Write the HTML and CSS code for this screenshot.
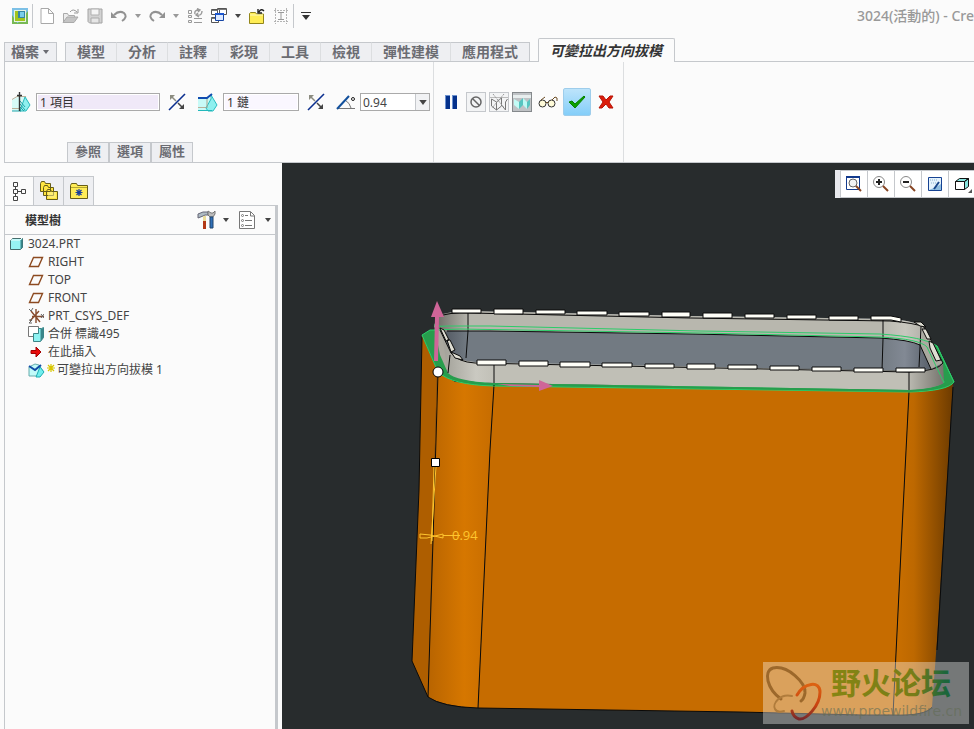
FILE: index.html
```html
<!DOCTYPE html>
<html lang="zh-Hant">
<head>
    <meta charset="UTF-8">
    <meta name="viewport" content="width=device-width, initial-scale=1.0">
    <title>3024(活動的)</title>
    <link rel="stylesheet" href="styles.css">
</head>
<body>
    <!-- shared icons -->
    <svg class="defs" aria-hidden="true">
        <symbol id="caret" viewBox="0 0 6 4"><path d="M0 0h6L3 4z" fill="currentColor"/></symbol>
        <symbol id="flip" viewBox="0 0 18 18">
            <path d="M1 17 17 1" stroke="#0b2f8f" stroke-width="1.6"/>
            <path d="M2 2h5L2 7z" fill="#8c8c80"/><path d="M3 3l5 5" stroke="#8c8c80" stroke-width="1.5"/>
            <path d="M16 16h-5l5-5z" fill="#444"/><path d="M10 10l5 5" stroke="#444" stroke-width="1.5"/>
        </symbol>
        <symbol id="plane" viewBox="0 0 16 12">
            <path d="M1.500 10.500h9l4-9h-9z" fill="none" stroke="#8c4a20" stroke-width="1.400"/>
        </symbol>
    </svg>

    <div class="quickbar">
        <button class="tool" aria-label="視窗">
            <svg width="16" height="16"><path d="M0 0h16v16H0z" fill="#7cc0e6"/><path d="M0 7l6 9H0zM16 3v13H5z" fill="#78b955"/><path d="M2 2h12v12H2z" fill="#e4f3e4"/><path d="M3 3h10v10H3z" fill="#a2c51c"/><path d="M6 3h7v7H6z" fill="#3586a5"/><path d="M8 4h4v5H8z" fill="#78cdea"/></svg>
        </button>
        <span class="divider"></span>
        <button class="tool first" aria-label="新建">
            <svg width="14" height="16"><path d="M1 .5h7.500l5 5v10H1z M8.500.500v5h5" fill="#fff" stroke="#a8a8a8"/></svg>
        </button>
        <button class="tool" aria-label="開啟">
            <svg width="18" height="16"><path d="M1.500 14V5.500h4l1 2h6V9" fill="#ececec" stroke="#aaa"/><path d="M1 14.500 5 9h11l-4 5.500z" fill="#c4c4c4" stroke="#aaa"/><path d="M8 4q3-4 7 0M16 1v4h-4" fill="none" stroke="#999"/></svg>
        </button>
        <button class="tool" aria-label="儲存">
            <svg width="16" height="16"><path d="M1 1h14v14H2.500L1 13.500z" fill="#d2d2d2" stroke="#a4a4a4"/><path d="M4 1h8v6H4z" fill="#f4f4f4" stroke="#b0b0b0"/><path d="M4 10h8v5H4z" fill="#e6e6e6" stroke="#aaa"/></svg>
        </button>
        <button class="tool" aria-label="復原">
            <svg width="16" height="14"><path d="M3 6q5-5 10-2 4 4-2 8" fill="none" stroke="#929292" stroke-width="2"/><path d="M0 3v6h6z" fill="#929292"/></svg>
        </button>
        <button class="drop pale" aria-label="復原清單"><svg width="6" height="4"><use href="#caret"/></svg></button>
        <button class="tool" aria-label="重做">
            <svg width="16" height="14"><path d="M13 6Q8 1 3 4q-4 4 2 8" fill="none" stroke="#929292" stroke-width="2"/><path d="M16 3v6h-6z" fill="#929292"/></svg>
        </button>
        <button class="drop pale" aria-label="重做清單"><svg width="6" height="4"><use href="#caret"/></svg></button>
        <button class="tool" aria-label="重新產生">
            <svg width="16" height="16" fill="none" stroke="#999"><path d="M1.500 2.500h3v3h-3zM1.500 7.500h3v2h-3zM1.500 12.500h3v2h-3zM7 10.500h8M7 14.500h8"/><path d="M8 6q-1-4 4-4M10 .5l3 1.500-2 2M15 3q0 5-5 4M12 9l-3-2 2-2" stroke-width="1.400"/></svg>
        </button>
        <button class="tool" aria-label="視窗切換">
            <svg width="16" height="16"><path d="M.5 1.500h8v5h-8zM6.500.500h9v6h-9zM.5 9.500h7v5h-7z" fill="#fff" stroke="#555"/><path d="M.5 2.500h6M7 1.500h8M.5 10.500h6" stroke="#777"/><path d="M4.500 5.500h8v7h-8z" fill="#dce9ff" stroke="#1545a5"/><path d="M4 6h9" stroke="#1b56d0" stroke-width="2"/></svg>
        </button>
        <button class="drop" aria-label="視窗清單"><svg width="6" height="4"><use href="#caret"/></svg></button>
        <button class="tool" aria-label="關閉">
            <svg width="16" height="16"><path d="M.5 15.500V5.500l1-1h5l1 1.500h7v9.500z" fill="#ffed55" stroke="#93861b"/><path d="M1 7h13" stroke="#fffbc0"/><path d="M15 3q-3-3-5 1M9 1v4h4" fill="none" stroke="#222" stroke-width="1.400"/></svg>
        </button>
        <button class="tool" aria-label="選取">
            <svg width="16" height="16" fill="none" stroke="#b4b4b4"><path d="M1 2.500h14M1 13.500h14M2.500 0v16M13.500 0v16" stroke-dasharray="2 1"/><path d="M5 4.500h6M5 11.500h6M8 5v6" stroke="#999"/></svg>
        </button>
        <span class="divider"></span>
        <button class="tool" aria-label="自訂">
            <svg width="10" height="8"><path d="M0 0h10v1H0zM1 3h8L5 8z" fill="#333"/></svg>
        </button>
        <div class="title">3024(活動的) - Cre</div>
    </div>

    <div class="tabs">
        <button class="tab file">檔案<svg width="6" height="4"><use href="#caret"/></svg></button>
        <div class="tab-group">
            <button class="tab">模型</button>
            <button class="tab">分析</button>
            <button class="tab">註釋</button>
            <button class="tab">彩現</button>
            <button class="tab">工具</button>
            <button class="tab">檢視</button>
            <button class="tab">彈性建模</button>
            <button class="tab">應用程式</button>
        </div>
        <button class="tab active">可變拉出方向拔模</button>
    </div>

    <div class="dashboard">
        <div class="group settings">
            <div class="row">
                <svg class="lead" width="20" height="20"><path d="M1 8l8-4h6l4 9-4 6H1z" fill="#d6faf7"/><path d="M1 7.500l5-3h9M1 16.500h7" fill="none" stroke="#b9b09a"/><path d="M14 5l5 8-4 6H9l2-6z" fill="#8ff0ef" stroke="#2bb8bb"/><path d="M1 19h9M9 12l5 6M9 9l5 6M9 15l4 4" stroke="#1fa5aa"/><path d="M8.500 2v17M6 3.500h5M8.500 0v4" stroke="#333" stroke-width="1.400"/></svg>
                <input class="field hinge" type="text" value="1 項目" aria-label="拔模曲面">
                <button class="flip" aria-label="反轉方向"><svg width="18" height="18"><use href="#flip"/></svg></button>
                <svg class="chain" width="24" height="20"><path d="M4 6h12l6 8-4 5H4z" fill="#c8faf7"/><path d="M4 6.500h9l4-4M4 15.500h8" fill="none" stroke="#b9b09a"/><path d="M17 3l6 10-4 6h-5l-2-3 5-9z" fill="#8ff0ef" stroke="#29bdc0"/><path d="M4 18.500h14" stroke="#22b8bb"/><path d="M4 6h9l5-4" fill="none" stroke="#104cb0" stroke-width="2"/><path d="M13 7v9" stroke="#aaa38c"/></svg>
                <input class="field link" type="text" value="1 鏈" aria-label="拔模樞軸">
                <button class="flip" aria-label="反轉角度"><svg width="18" height="18"><use href="#flip"/></svg></button>
                <svg class="angle" width="22" height="16"><path d="M5 14.500h17M12 6q5 3 6 8" fill="none" stroke="#777"/><path d="M4 15 16 2" stroke="#12509c" stroke-width="2"/><circle cx="20" cy="5" r="1.500" fill="none" stroke="#222"/></svg>
                <div class="combo">
                    <select aria-label="角度"><option>0.94</option></select>
                    <span class="combo-arrow"><svg width="8" height="5"><use href="#caret"/></svg></span>
                </div>
            </div>
            <div class="subtabs">
                <button class="subtab">參照</button>
                <button class="subtab">選項</button>
                <button class="subtab">屬性</button>
            </div>
        </div>
        <div class="group actions">
            <div class="row">
                <button class="pause" aria-label="暫停"><svg width="12" height="14"><path d="M0 0h5v14H0zM7 0h5v14H7z" fill="#6d92cf"/><path d="M1 1h4v13H1zM8 1h4v13H8z" fill="#05318b"/></svg></button>
                <button class="mode" aria-label="無預覽"><svg width="14" height="14" fill="none" stroke="#666" stroke-width="1.500"><circle cx="7" cy="7" r="5"/><path d="M3.500 3.500l7 7"/></svg></button>
                <button class="mode" aria-label="未附加"><svg width="18" height="18" fill="none" stroke="#777"><path d="M0 4.500h18" stroke="#bbb"/><path d="M1.500 6v7l5 4V9zM6.500 17l5-4V5l-5 4M11.500 5v7l4 5V9l2-3"/><path d="M3 1l12 15M14 1 2 15" stroke="#999" stroke-dasharray="2 1"/></svg></button>
                <button class="mode pressed" aria-label="已附加"><svg width="18" height="16"><path d="M0 1h18v3H0z" fill="#e8eeee"/><path d="M1 5l5 3v7l-5-4z" fill="#c3fbf5"/><path d="M6 8l4-4v7l-4 4z" fill="#56c4bf"/><path d="M10 4l4 4v7l-4-4z" fill="#bdf9f4"/><path d="M14 8l3-3v6l-3 4z" fill="#56c4bf"/></svg></button>
                <button class="glasses" aria-label="預覽"><svg width="20" height="14" fill="#fffbd9" stroke="#333"><circle cx="4.500" cy="8.500" r="3.500"/><circle cx="13.500" cy="8.500" r="3.500"/><path d="M8 8q1-2 2 0M3 5l4-3M14 5l3-3q3 0 2 4" fill="none" stroke="#6b4b22"/></svg></button>
                <button class="ok" aria-label="確定"><svg width="18" height="14"><path d="M1 7l3-1 3 3 9-8 1 1L7 13z" fill="#0ba100" stroke="#078000"/></svg></button>
                <button class="cancel" aria-label="取消"><svg width="16" height="14"><path d="M1 1h4l3 4 4-4h3l-4 6 4 6h-4l-3-4-4 4H1l4-6z" fill="#dc1c0a" stroke="#b51407"/></svg></button>
            </div>
        </div>
    </div>

    <div class="workspace">
        <div class="navigator">
            <div class="nav-tabs">
                <button class="nav-tab active" aria-label="模型樹"><svg width="14" height="20" fill="none" stroke="#444"><path d="M1.500.500h4v4h-4zM1.500 7.500h4v4h-4zM1.500 14.500h4v4h-4zM9.500 7.500h4v4h-4zM3.500 5v2M3.500 12v2M6 9.500h3"/></svg></button>
                <button class="nav-tab" aria-label="資料夾瀏覽器"><svg width="20" height="20" fill="#ffe640" stroke="#665d18"><path d="M1.500 10.500v-8l1-2h3l1 2h5v8zM4.500 14.500v-8l1-2h3l1 2h5v8zM7.500 18.500v-8l1-2h3l1 2h6v8z"/><path d="M9 12h8M9 14h8M9 16h8" stroke="#fff7a3"/></svg></button>
                <button class="nav-tab" aria-label="我的最愛"><svg width="18" height="16"><path d="M.500 15.500v-13l1-2h5l1 2h10v13z" fill="#ffec56" stroke="#665d18"/><path d="M1 4.500h16" stroke="#b5a631"/><path d="M9 6v7M5.500 9.500h7M6.500 7l5 5M11.500 7l-5 5" stroke="#193e9d" stroke-width="1.200"/></svg></button>
            </div>
            <div class="panel">
                <div class="panel-head">
                    <h2>模型樹</h2>
                    <button class="tool" aria-label="設定"><svg width="20" height="20"><path d="M1 4l5-2h5v3H8L6 6 1 8z" fill="#aebbc3" stroke="#667"/><path d="M6 6h3v13H6z" fill="#b33916"/><path d="M6 6h3v5H6z" fill="#eadd9c"/><path d="M11 1v4l2 2h3l2-3V1l-2 2h-2z" fill="#bbb" stroke="#777"/><path d="M13 7h3v11h-3z" fill="#3170b8" stroke="#20446c"/></svg></button>
                    <button class="drop" aria-label="設定清單"><svg width="6" height="4"><use href="#caret"/></svg></button>
                    <button class="tool" aria-label="顯示"><svg width="16" height="18" fill="none" stroke="#777"><path d="M.5.500h11l4 4v13H.500z" fill="#fff"/><path d="M11.500 1v4h4M6 4.500h3M6 9.500h7M6 14.500h7"/><circle cx="3.500" cy="4.500" r="1"/><circle cx="3.500" cy="9.500" r="1"/><circle cx="3.500" cy="14.500" r="1"/></svg></button>
                    <button class="drop last" aria-label="顯示清單"><svg width="6" height="4"><use href="#caret"/></svg></button>
                </div>
                <ul class="tree">
                    <li class="root"><svg width="14" height="14"><path d="M.5 3.500l2-2h10v9l-2 2H.5z" fill="#97f3f3" stroke="#446b6b"/><path d="M10.500 3.500l2-2v9l-2 2z" fill="#39868b"/><path d="M1 3h9l2-2" fill="none" stroke="#effffe"/></svg>3024.PRT</li>
                    <li><svg width="16" height="12"><use href="#plane"/></svg>RIGHT</li>
                    <li><svg width="16" height="12"><use href="#plane"/></svg>TOP</li>
                    <li><svg width="16" height="12"><use href="#plane"/></svg>FRONT</li>
                    <li><svg width="16" height="16" fill="none" stroke="#884b2d" stroke-width="1.400"><path d="M8 1v14M3 3l9 11M2 13l9-10M4 8.500h12"/><path d="M1 1l2 2 2-3M1 12h3l-3 3h3M13 6l3 4M16 6l-3 4" stroke="#666" stroke-width="1"/></svg>PRT_CSYS_DEF</li>
                    <li><svg width="16" height="16"><path d="M.5.500h10v10H.5z" fill="#fff" stroke="#777"/><path d="M5.500 7.500h5v-5h3l2-1v10l-3 4h-7z" fill="#8ff2f2" stroke="#3c8587"/><path d="M12.500 3v12.500l3-4V2z" fill="#39868b"/></svg>合併 標識495</li>
                    <li><svg width="16" height="12"><path d="M3 4.500h5V1l5 5-5 5V7.500H3z" fill="#e80c0c" stroke="#a30000"/></svg>在此插入</li>
                    <li class="new-feature"><svg width="29" height="16"><path d="M1 5l6-3 4 1 4 6-4 5H1z" fill="#c1fbf9" stroke="#68abac"/><path d="M12 5l4 5-4 5H8z" fill="#71eeee" stroke="#1daeb2"/><path d="M1 4l6 4 6-5" fill="none" stroke="#104ca5" stroke-width="2"/><path d="M23 2v8M19 6h8M20 3l6 6M26 3l-6 6" stroke="#d8c600" stroke-width="1.200"/></svg>可變拉出方向拔模 1</li>
                </ul>
            </div>
        </div>

        <div class="canvas">
            <svg class="model" viewBox="282 163 692 566" preserveAspectRatio="xMinYMin slice">
                <defs>
                    <linearGradient id="leftFillet"><stop offset="0" stop-color="#b86400"/><stop offset=".55" stop-color="#d67700"/><stop offset="1" stop-color="#c66c00"/></linearGradient>
                    <linearGradient id="rightFillet"><stop offset="0" stop-color="#cb7000"/><stop offset=".35" stop-color="#bd6800"/><stop offset="1" stop-color="#6d3b00"/></linearGradient>
                    <linearGradient id="inside" gradientUnits="userSpaceOnUse" x1="442" y1="0" x2="945" y2="0"><stop offset="0" stop-color="#505760"/><stop offset=".05" stop-color="#727a82"/><stop offset=".87" stop-color="#727a82"/><stop offset=".92" stop-color="#828994"/><stop offset=".97" stop-color="#59616b"/></linearGradient>
                    <linearGradient id="backWall" gradientUnits="userSpaceOnUse" x1="440" y1="0" x2="930" y2="0"><stop offset="0" stop-color="#777670"/><stop offset=".06" stop-color="#b8b7ae"/><stop offset=".9" stop-color="#b8b7ae"/><stop offset=".95" stop-color="#c8c7bf"/><stop offset="1" stop-color="#aaa9a1"/></linearGradient>
                    <linearGradient id="frontWall" gradientUnits="userSpaceOnUse" x1="446" y1="0" x2="946" y2="0"><stop offset="0" stop-color="#a5a49c"/><stop offset=".06" stop-color="#cac9c1"/><stop offset=".1" stop-color="#c0bfb6"/><stop offset=".92" stop-color="#c0bfb6"/><stop offset="1" stop-color="#716f69"/></linearGradient>
                    <linearGradient id="brand"><stop offset="0" stop-color="#868513"/><stop offset=".7" stop-color="#777d18"/><stop offset=".95" stop-color="#1c663b"/></linearGradient>
                    <linearGradient id="ribbon" x2="0" y2="1"><stop offset="0" stop-color="#dc6212"/><stop offset=".6" stop-color="#ca4310"/><stop offset="1" stop-color="#77282b"/></linearGradient>
                </defs>

                <!-- body -->
                <path d="M422 335 437 370 428 697 412 661 419 490z" fill="#ae5e00"/>
                <path d="M437 370 455 382 494 384 490 450 478 708Q442 706 428 697z" fill="url(#leftFillet)"/>
                <path d="M494 384 909 391 902 530 893 715 862 715 740 712 478 708 490 450z" fill="#c66c00"/>
                <path d="M909 391Q940 390 953 382L937 640 932 707Q923 716 893 715L902 530z" fill="url(#rightFillet)"/>
                <path d="M422 337 419 490 412 661 428 697Q442 707 478 708L740 712 862 715 893 715Q926 716 932 707M438 372 433 540 428 697M494 385 490 450 478 708M909 392 902 530 893 715M953 387 937 650" class="edge"/>

                <!-- green draft faces -->
                <path d="M422 335 430 330 440 330 452 374 475 381 494 384 909 389Q938 388 944 382L930 346 937 346 954 382Q948 391 909 392L494 386Q452 385 438 372z" fill="#279d4d" stroke="#2bd06b"/>

                <!-- inner cavity and rim -->
                <path d="M438 316Q448 311 470 311L690 316 890 319Q915 321 924 327L943 363 935 371 475 363 450 357z" fill="url(#inside)"/>
                <path d="M438 316Q448 311 470 311L690 316 890 319Q915 321 924 327L934 346 920 345Q905 339 880 338L690 334 490 331 447 331 440 337 434 325z" fill="url(#backWall)"/>
                <path d="M434 325 440 330 451 355 448 373 440 355z" fill="#aaa89f"/>
                <path d="M441 330 451 353Q458 361 475 362L909 371Q936 370 943 363L944 383Q934 389 909 390L494 383Q456 381 448 373z" fill="url(#frontWall)"/>
                <path d="M920 345 931 369 943 363 924 327z" fill="#aaa99f"/>
                <path d="M438 317Q448 312 470 313L690 318 890 321Q915 323 924 327L943 363Q938 371 909 372L475 363Q458 362 451 353L440 330M447 331 490 331 690 334 880 338Q910 340 920 345L931 369M468 309V331L466 358M883 319V339L882 370M921 327 919 367M450 355 448 373M494 363V386M909 370V392" class="edge"/>
                <path d="M434 325Q440 327 450 326L490 326 700 331 880 334Q925 337 937 346L954 382M434 330 460 329 700 333 880 337Q920 339 927 347L944 383" class="hint"/>
                <path d="M448 376Q458 383 494 384L909 391Q936 390 945 384" fill="none" stroke="#279d4d" stroke-width="2"/>

                <!-- raised teeth along the rim -->
                <path class="tooth" d="M452 309h29v4h-29zM494 309h29v5h-29zM536 310h29v4h-29zM577 311h30v4h-30zM619 312h30v4h-30zM662 312h28v5h-28zM703 313h29v5h-29zM745 314h29v4h-29zM787 315h29v4h-29zM829 316h29v4h-29zM871 316l20 0 10 2v4l-10-2h-20z"/>
                <path class="tooth" d="M477 360h29v5h-29zM519 361h29v5h-29zM560 362h30v5h-30zM602 363h30v4h-30zM645 364h29v4h-29zM687 364h28v5h-28zM728 365h29v4h-29zM770 366h29v4h-29zM812 367h29v4h-29zM854 368h29v4h-29zM896 368h29v4h-29z"/>
                <path class="tooth side" d="M440 328l4 2 5 10-3 1zM447 340l3 0 5 10-4 2zM451 352l9 4 3 4-8-2zM914 322l7 0 5 5-6-1zM922 329l4 0 5 10-4 0zM929 341l4 2 8 17-5 1-6-13z"/>

                <!-- drag handles -->
                <path d="M437 301 444 317H439L438 361H434L435 317H431zM497 384 539 385V380L553 386 539 391V387L510 386z" fill="#cf6598"/>
                <path d="M434 466 432 541M436 466 431 544M420 534l10 1 13 3M420 538h7l16-4M420 534v4M443 534v4M443 535.5h17" fill="none" stroke="#ffc52e"/>
                <circle cx="438" cy="372" r="5" fill="#fff" stroke="#000"/>
                <path d="M431.500 458.500h8v8h-8z" fill="#fff" stroke="#000"/>
                <text class="dimension" x="452" y="540">0.94</text>

                <!-- forum mark -->
                <path d="M763 662h206v62H763z" fill="#fff" fill-opacity=".36"/>
                <g fill="none" stroke-linecap="round">
                    <path d="M781 699C767 689 763 671 773 668 788 665 806 683 805 693Q804 699 801 701" stroke="#9c682b" stroke-width="3"/>
                    <path d="M792 696C780 693 772 704 775 709Q777 713 784 711" stroke="#b07c3c" stroke-width="2"/>
                    <path d="M797 695C804 683 820 680 820 692 820 706 806 720 799 719Q793 717 792 711" stroke="url(#ribbon)" stroke-width="3"/>
                </g>
                <text class="brand" x="831" y="694">野火论坛</text>
                <text class="site" x="821" y="716">www.proewildfire.cn</text>
            </svg>

            <div class="view-tools">
                <button aria-label="重新調整"><svg width="18" height="18"><path d="M1.500 1.500h13v13h-13z" fill="#fff" stroke="#123a8d"/><path d="M1 2h14" stroke="#123a8d" stroke-width="2"/><circle cx="8" cy="8" r="4" fill="#f3f3f3" stroke="#666"/><path d="M11 11l5 5" stroke="#874523" stroke-width="2"/></svg></button>
                <button aria-label="放大"><svg width="18" height="18"><circle cx="7" cy="7" r="5.500" fill="#fff" stroke="#888"/><path d="M4 7h6M7 4v6" stroke="#222" stroke-width="2"/><path d="M11 11l5 5" stroke="#874523" stroke-width="2"/></svg></button>
                <button aria-label="縮小"><svg width="18" height="18"><circle cx="7" cy="7" r="5.500" fill="#fff" stroke="#888"/><path d="M4 7h6" stroke="#222" stroke-width="2"/><path d="M11 11l5 5" stroke="#874523" stroke-width="2"/></svg></button>
                <button aria-label="重繪"><svg width="16" height="16"><path d="M1.500 1.500h13v13h-13z" fill="#e4f2fc" stroke="#174393"/><path d="M2 14l7-3 5-3v6z" fill="#8ebde0"/><path d="M12 6l-5 7" stroke="#16468b" stroke-width="2"/><path d="M3 4h7M4 7h5" stroke="#8bb2cf" stroke-dasharray="1 1"/></svg></button>
                <button aria-label="顯示樣式"><svg width="20" height="20"><path d="M3.500 7.500h9v8h-9z" fill="#fff" stroke="#111"/><path d="M12.500 7.500l4-3v8l-4 3zM3.500 7.500l4-3h9l-4 3z" fill="#86e5df" stroke="#111"/><path d="M20 15v4h-4z" fill="#555"/></svg></button>
            </div>
        </div>
    </div>
</body>
</html>
```
FILE: styles.css
```css
* {
    box-sizing: border-box;
}
body {
    display: flex;
    flex-direction: column;
    height: 100vh;
    margin: 0;
    overflow: hidden;
    background-color: #fbfbfb;
    color: #444;
    font-family: "Noto Sans", "Noto Sans CJK TC", sans-serif;
    font-size: 12px;
}
button {
    display: flex;
    align-items: center;
    justify-content: center;
    flex: none;
    margin: 0;
    padding: 0;
    border: none;
    background: none;
    color: inherit;
    font-family: inherit;
}
svg {
    flex: none;
}
.defs {
    position: absolute;
    width: 0;
    height: 0;
}

/* quick access toolbar */
.quickbar {
    display: flex;
    align-items: center;
    flex: none;
    height: 32px;
    padding-left: 8px;
}
.tool {
    width: 24px;
    height: 24px;
}
.tool.first {
    margin-left: 2px;
}
.drop {
    width: 14px;
    height: 24px;
}
.drop.pale {
    color: #999;
}
.divider {
    width: 1px;
    height: 24px;
    background-color: #c5c8cc;
}
.title {
    margin-left: auto;
    color: #999;
    font-size: 14px;
    font-weight: 500;
    line-height: 20px;
    white-space: nowrap;
}

/* ribbon tabs */
.tabs {
    display: flex;
    align-items: flex-end;
    flex: none;
    height: 30px;
    margin-left: 4px;
    border-bottom: 1px solid #c5c8cc;
}
.tab-group {
    display: flex;
    margin: 0 8px;
    border-right: 1px solid #c5c8cc;
}
.tab {
    height: 19px;
    padding: 0 11px;
    border-top: 1px solid #c5c8cc;
    border-left: 1px solid #dcdee0;
    background-color: #eeeff2;
    color: #6b6c72;
    font-size: 14px;
    font-weight: bold;
    line-height: 18px;
}
.tab:first-child {
    border-left-color: #c5c8cc;
}
.tab.file {
    gap: 4px;
    padding: 0 7px 0 6px;
    border-right: 1px solid #c5c8cc;
}
.tab.active {
    height: 24px;
    margin-bottom: -1px;
    padding: 0 12px 0 11px;
    border: 1px solid #c5c8cc;
    border-bottom: none;
    border-radius: 2px 2px 0 0;
    background-color: #fbfbfb;
    color: #333;
    font-style: italic;
}

/* feature dashboard */
.dashboard {
    display: flex;
    flex: none;
    margin-left: 4px;
    border-left: 1px solid #c5c8cc;
    border-bottom: 1px solid #c5c8cc;
}
.group {
    height: 100px;
    border-right: 1px solid #dcdee0;
}
.row {
    display: flex;
    align-items: center;
    height: 80px;
}
.settings .row {
    gap: 5px;
    padding: 0 3px 0 6px;
}
.actions .row {
    gap: 3px;
    padding: 0 5px;
}
.field {
    height: 18px;
    padding: 0 3px;
    border: 1px solid #aaa;
    outline: 1px solid #fff;
    outline-offset: -2px;
    background-color: #faf7ff;
    color: #333;
    font-family: inherit;
    font-size: 12px;
}
.field.hinge {
    width: 124px;
    background-color: #f0e9f8;
}
.field.link {
    width: 76px;
}
.flip {
    width: 24px;
    height: 24px;
}
.combo {
    position: relative;
}
.combo select {
    display: block;
    width: 70px;
    height: 18px;
    padding: 0 18px 0 2px;
    border: 1px solid #aaa;
    border-radius: 0;
    appearance: none;
    background-color: #fff;
    color: #444;
    font-family: inherit;
    font-size: 12px;
}
.combo-arrow {
    position: absolute;
    top: 1px;
    right: 1px;
    bottom: 1px;
    display: flex;
    align-items: center;
    justify-content: center;
    width: 14px;
    border-left: 1px solid #c5c8cc;
    background-color: #f1f2f4;
    pointer-events: none;
}
.subtabs {
    display: flex;
    padding-left: 62px;
}
.subtab {
    width: 42px;
    height: 20px;
    padding-bottom: 2px;
    border: 1px solid #c5c8cc;
    border-bottom: none;
    background-color: #eeeff2;
    color: #6b6c72;
    font-size: 13px;
    font-weight: bold;
    line-height: 17px;
}
.pause, .cancel {
    width: 24px;
    height: 24px;
}
.mode {
    width: 20px;
    height: 20px;
    border: 1px solid #c5c8cc;
    background-color: #f3f4f5;
}
.mode.pressed {
    border-color: #85898c;
    background-color: #bfc2c5;
}
.glasses {
    width: 25px;
    height: 24px;
}
.ok {
    width: 28px;
    height: 28px;
    border: 1px solid #9ecdeb;
    border-radius: 2px;
    background: linear-gradient(#bde4fb, #84cef9);
}

/* navigator */
.workspace {
    display: flex;
    flex: 1;
    min-height: 0;
}
.navigator {
    display: flex;
    flex-direction: column;
    flex: none;
    width: 282px;
    padding: 13px 4px 0 4px;
}
.nav-tabs {
    display: flex;
}
.nav-tab {
    width: 30px;
    height: 29px;
    border: 1px solid #c5c8cc;
    border-width: 1px 1px 0 0;
    background-color: #eeeff2;
}
.nav-tab.active {
    height: 30px;
    margin-bottom: -1px;
    border-left-width: 1px;
    background-color: #fbfbfb;
}
.panel {
    flex: 1;
    border: 1px solid #c5c8cc;
    border-width: 1px 3px 0 1px;
}
.panel-head {
    display: flex;
    align-items: center;
    height: 29px;
    border-bottom: 1px solid #c5c8cc;
}
.panel-head h2 {
    margin: 0 auto 0 20px;
    font-size: 12px;
    color: #333;
}
.panel-head .tool {
    margin-left: 2px;
}
.panel-head .last {
    margin-left: 2px;
}
.tree {
    margin: 0;
    padding: 0;
    list-style-type: none;
}
.tree li {
    display: flex;
    align-items: center;
    gap: 4px;
    height: 18px;
    padding-left: 23px;
    line-height: 18px;
    white-space: nowrap;
}
.tree li.root {
    padding-left: 5px;
}
.tree li.new-feature {
    gap: 0;
}

/* graphics area */
.canvas {
    position: relative;
    flex: 1;
    min-width: 0;
    overflow: hidden;
    background-color: #282c2d;
}
.model {
    display: block;
    width: 100%;
    height: 100%;
}
.edge {
    fill: none;
    stroke: #0a0a0a;
}
.hint {
    fill: none;
    stroke: #2bcc69;
}
.tooth {
    fill: #fffff8;
    stroke: #0a0a0a;
}
.tooth.side {
    fill: #deddd2;
}
.dimension {
    fill: #ffc52e;
    font-family: "Open Sans", sans-serif;
    font-size: 13px;
}
.brand {
    fill: url(#brand);
    font-family: "Noto Sans CJK SC", sans-serif;
    font-size: 30px;
    font-weight: bold;
}
.site {
    fill: #626c55;
    fill-opacity: .6;
    font-family: "DejaVu Sans", sans-serif;
    font-size: 14px;
}
.view-tools {
    position: absolute;
    top: 7px;
    right: 0;
    display: flex;
    padding-left: 5px;
    background-color: #e8e9ed;
}
.view-tools button {
    width: 27px;
    height: 28px;
    border: 1px solid #c5c8cc;
    border-right: none;
    background-color: #fff;
}
.view-tools button:last-child {
    width: 26px;
}
```
